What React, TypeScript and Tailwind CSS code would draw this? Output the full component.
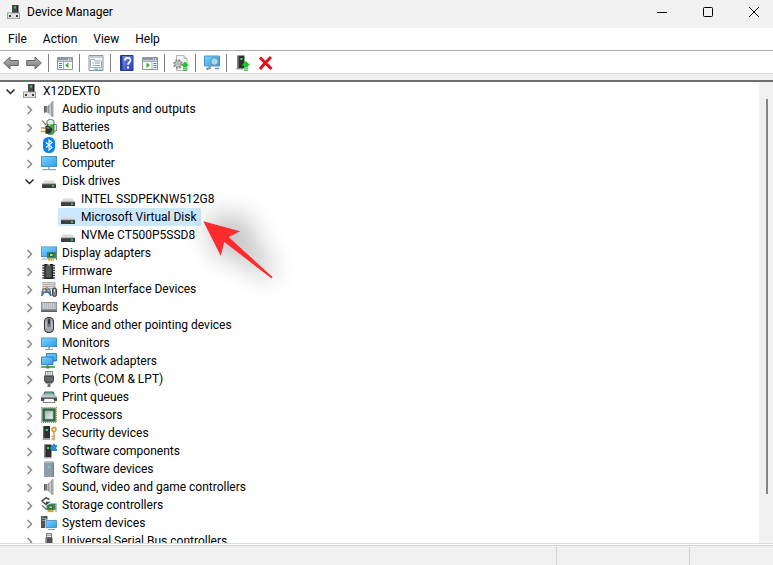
import React, { useState } from 'react'

interface DeviceNode {
  label: string
  icon: React.ReactNode
  children?: DeviceNode[]
}

function Icon({ children }: { children: React.ReactNode }) {
  return (
    <svg viewBox="0 0 16 16" className="h-4 w-4 shrink-0" aria-hidden="true">
      {children}
    </svg>
  )
}

// Shared gradients for the small drawings
function Gradients() {
  return (
    <svg className="absolute h-0 w-0" aria-hidden="true">
      <defs>
        <linearGradient id="screen" x1="0" y1="0" x2="1" y2="1">
          <stop offset="0" stopColor="#7dd2ff" />
          <stop offset="1" stopColor="#2f9fee" />
        </linearGradient>
        <linearGradient id="metal" x1="0" y1="0" x2="1" y2="0">
          <stop offset="0" stopColor="#6f7377" />
          <stop offset="0.6" stopColor="#d4d7d9" />
          <stop offset="1" stopColor="#85898c" />
        </linearGradient>
        <linearGradient id="arrow" x1="0" y1="0" x2="0" y2="1">
          <stop offset="0" stopColor="#b5b5b5" />
          <stop offset="1" stopColor="#7d7d7d" />
        </linearGradient>
        <linearGradient id="help" x1="0" y1="0" x2="1" y2="1">
          <stop offset="0" stopColor="#7f95e6" />
          <stop offset="1" stopColor="#2740b4" />
        </linearGradient>
        <linearGradient id="die" x1="0" y1="0" x2="1" y2="1">
          <stop offset="0" stopColor="#a9afaf" />
          <stop offset="1" stopColor="#f1f3f3" />
        </linearGradient>
      </defs>
    </svg>
  )
}

const HostIcon = (
  <Icon>
    <path d="M6 1h6v9H6z" fill="#454749" />
    <path d="M11 1h1.500v9H11z" fill="#26282a" />
    <path d="M8 2.500h2v2H8z" fill="#2fe03a" />
    <path d="M1 8.500h13v6.500H1z" fill="#8d9092" />
    <path d="M1.800 9.300h11.400v5H1.800z" fill="#dfe1e2" />
    <path d="M3 11h2v2H3zM10 11h2v2h-2z" fill="#3a3c3e" />
  </Icon>
)

const SpeakerIcon = (
  <Icon>
    <path d="M3 5h3v6.500H3z" fill="#7b7f83" />
    <path d="M3 5h1v6.500H3z" fill="#55595c" />
    <path d="M6.500 5L11 .5v15.500L6.500 11.500z" fill="url(#metal)" />
    <path d="M11 0h1.500v16H11z" fill="#a3a7aa" />
  </Icon>
)

const BatteryIcon = (
  <Icon>
    <path d="M6 2.500C6 0 13 0 13 2.500v11c0 2.500-7 2.500-7 0z" fill="#35b040" stroke="#555a55" strokeWidth=".9" />
    <path d="M6.500 2.500C7 .5 12 .5 12.500 2.500v2c-1 1.200-5 1.200-6 0z" fill="#e3ebe3" />
    <path d="M8.500 5.500V14" stroke="#93e696" strokeWidth="1.500" />
    <path d="M13 5.500h2.300V12H13" fill="none" stroke="#6d726d" />
    <path d="M1 1.500c1 2 2.500 1 3.500 4.500" fill="none" stroke="#333" />
    <path d="M0 9h5M0 12.500h5" stroke="#c89b2c" strokeWidth="1.500" />
    <path d="M4.500 6.500L9 7.500l2.500 2.500L9.500 14l-5 1z" fill="#2e3133" />
    <path d="M5.500 8.700l3 .5" stroke="#9a9a9a" />
  </Icon>
)

const BluetoothIcon = (
  <Icon>
    <rect x="2" y="0" width="12" height="16" rx="5.500" fill="#0a82f5" />
    <path d="M5 5.500l6 5L8 13V3l3 2.500-6 5" fill="none" stroke="#fff" strokeWidth="1.100" />
  </Icon>
)

const ComputerIcon = (
  <Icon>
    <path d="M0 1h16v11H0z" fill="#4288b5" />
    <path d="M.7 1.700h14.600v9.600H.7z" fill="url(#screen)" />
    <path d="M7 12h2v2H7z" fill="#a9bac5" />
    <path d="M1 14h14v1.200H1z" fill="#8ba2b1" />
  </Icon>
)

const DiskIcon = (
  <Icon>
    <path d="M3.500 7.500h9L15 11H1z" fill="#d9dadb" />
    <path d="M1 11h14v4H1z" fill="#3c3e40" />
    <path d="M1 11h14" stroke="#7f8284" strokeWidth=".8" />
    <path d="M11 12.300h2v1.500h-2z" fill="#3de04a" />
  </Icon>
)

const DisplayIcon = (
  <Icon>
    <path d="M0 1.500h16V12H0z" fill="#4288b5" />
    <path d="M.7 2.200h14.600v9H.7z" fill="url(#screen)" />
    <path d="M1 14h5" stroke="#8ba2b1" />
    <path d="M6 7h9v6.500H6z" fill="#3a8558" />
    <path d="M15.500 5.500V15" stroke="#767b7e" />
    <path d="M8.500 8.500h3.500v3H8.500z" fill="#b5d4c0" stroke="#174d2c" strokeWidth=".8" />
    <path d="M7 13.500h6v2.200H7z" fill="#f0a020" />
    <path d="M9.500 14v2M11.500 14v2" stroke="#fff" strokeWidth=".4" />
  </Icon>
)

const FirmwareIcon = (
  <Icon>
    <path d="M1.300 2.500h12.700M1.300 5h12.700M1.300 7.500h12.700M1.300 10h12.700M1.300 12.500h12.700M1.300 15h12.700" stroke="#3c3f42" strokeWidth="1.400" />
    <path d="M3.300 1h8.700v15H3.300z" fill="#222426" />
    <path d="M4.700 2.500h5.900v12H4.700z" fill="#55585b" />
    <path d="M6.500 1h2.500v1.500H6.500z" fill="#b5b5b5" />
  </Icon>
)

const HidIcon = (
  <Icon>
    <path d="M1.500 1h13v7h-13z" fill="#a8adb0" />
    <path d="M2.500 2.500h11M2.500 4.500h11M2.500 6.500h11" stroke="#fafafa" strokeWidth="1.200" strokeDasharray="1.300 .7" />
    <path d="M1 8.500C2.500 6.500 8 6.500 9.500 8.500l1.200 6.500H9L7 12H3.500L1.500 15H0z" fill="#56718e" />
    <path d="M2 9.500h2.500M3.200 8.300v2.400" stroke="#e8eef3" strokeWidth=".8" />
    <path d="M5 6h2.200v2.200H5z" fill="#f28b20" />
    <path d="M6.500 9.500h2" stroke="#7fd6ff" strokeWidth="1.500" />
    <rect x="11.500" y="7" width="4" height="8.500" rx="1.800" fill="#80858a" stroke="#2c2f31" strokeWidth=".9" />
    <path d="M13.500 8v3" stroke="#e4e4e4" strokeWidth=".7" />
  </Icon>
)

const KeyboardIcon = (
  <Icon>
    <path d="M0 3h16v10H0z" fill="#8f9498" />
    <path d="M0 11.500h16V13H0z" fill="#5b5f63" />
    <path d="M1.500 5h13M1.500 7h13M1.500 9h13" stroke="#f7f8f8" strokeWidth="1.300" strokeDasharray="1.300 .7" />
  </Icon>
)

const MouseIcon = (
  <Icon>
    <rect x="3.500" y=".5" width="9" height="15" rx="4" fill="#9ea3a8" stroke="#34383c" strokeWidth="1.100" />
    <path d="M6.500 1h3v8c0 1-3 1-3 0z" fill="#68707a" />
    <path d="M8 2.500v4.500" stroke="#15181b" strokeWidth="1.300" />
    <path d="M5 4.500v7M11 4.500v7" stroke="#c5c9cd" />
  </Icon>
)

const MonitorIcon = (
  <Icon>
    <path d="M0 2.500h16V12H0z" fill="#4a8dba" />
    <path d="M.8 3.300h14.400v8H.8z" fill="url(#screen)" />
    <path d="M7 12h2v2H7z" fill="#9db0bc" />
    <path d="M4 14h8v1H4z" fill="#8ba2b1" />
  </Icon>
)

const NetworkIcon = (
  <Icon>
    <path d="M5.500 .5h10V8h-10z" fill="url(#screen)" stroke="#1c6ca9" strokeWidth=".8" />
    <path d="M.5 4h11.500v7.500H.5z" fill="url(#screen)" stroke="#1c6ca9" strokeWidth=".8" />
    <path d="M5.500 11.500h2V13h-2z" fill="#8d9396" />
    <path d="M0 14h14" stroke="#4bbd56" strokeWidth="2" />
    <path d="M5 12.800h3.500v2.700H5z" fill="#3f9348" />
  </Icon>
)

const PortIcon = (
  <Icon>
    <path d="M4.500 .5h7v4.500h-7z" fill="#eceded" stroke="#6d7073" strokeWidth=".9" />
    <path d="M6.500 1v3.500M8 1v3.500M9.500 1v3.500" stroke="#9d9fa2" strokeWidth=".7" />
    <path d="M3 4.500h10V10l-2 2.500H5L3 10z" fill="#505356" />
    <path d="M5 6v4M7 6v4.500M9 6v4.500M11 6v4" stroke="#85898c" strokeWidth=".8" />
    <path d="M6.500 12.500h3V16h-3z" fill="#6c6f72" />
  </Icon>
)

const PrinterIcon = (
  <Icon>
    <path d="M3.500 2.500h9L14 6H2z" fill="#51565a" />
    <path d="M4.500 3.500h7l.8 1.500H3.700z" fill="#58bfa9" />
    <path d="M0 7.500L2 5.300h12l2 2.200V9H0z" fill="#c3c7ca" />
    <path d="M0 8.500h16V12H0z" fill="#4b4f53" />
    <path d="M3.300 9.500h9.400l1.300 4H2z" fill="#fafafa" stroke="#4a4d50" strokeWidth=".7" />
    <path d="M12 6.800h2" stroke="#4be05c" />
  </Icon>
)

const ProcessorIcon = (
  <Icon>
    <rect x=".6" y=".6" width="14.800" height="14.800" fill="none" stroke="#b39235" strokeWidth="1.200" strokeDasharray="1.200 .8" />
    <path d="M1.300 1.300h13.400v13.400H1.300z" fill="#2b6649" />
    <path d="M4 4h8v8H4z" fill="url(#die)" stroke="#8fae9d" strokeWidth=".6" />
  </Icon>
)

const SecurityIcon = (
  <Icon>
    <path d="M2 1h7v12.500H2z" fill="#2d2f31" />
    <path d="M2 1h1.200v12.500H2z" fill="#696c6f" />
    <path d="M4.800 4h2v2h-2z" fill="#3af04a" />
    <path d="M1.500 13.500H9V15H1.500z" fill="#a2a5a7" />
    <circle cx="13" cy="4.500" r="2" fill="none" stroke="#d3a24a" strokeWidth="1.800" />
    <path d="M13 7v8.500M12.500 11.500h-2M12.500 14h-2" stroke="#d3a24a" strokeWidth="1.500" />
  </Icon>
)

const ComponentIcon = (
  <Icon>
    <path d="M3.500 1.500h7V14h-7z" fill="#2d2f31" />
    <path d="M3.500 1.500h1.200V14H3.500z" fill="#696c6f" />
    <path d="M6 4h2v2H6z" fill="#3af04a" />
    <path d="M3 14h7.500v1.300H3z" fill="#a2a5a7" />
    <path d="M10 2h2c-.5-2 2.500-2 2 0h2v2.200c-1.500-.4-1.500 2 0 1.600V8h-6V5.800c-1.500.4-1.500-2 0-1.600z" fill="#2f8ad8" />
  </Icon>
)

const SoftwareIcon = (
  <Icon>
    <path d="M3 1.500L4.500 0h7L13 1.500V16H3z" fill="#8e9da8" />
    <path d="M3 1.500L4.500 0h7L13 1.500z" fill="#bcc6cd" />
    <path d="M11.500 1.500H13V16h-1.500z" fill="#74838e" />
    <path d="M7 5h2v2H7z" fill="#45dcf2" />
  </Icon>
)

const StorageIcon = (
  <Icon>
    <path d="M8.500 2.500L5 .8 1 4l4 3.500L7.500 5.500H5" fill="none" stroke="#45484a" strokeWidth="1.500" />
    <path d="M1 8.500l4 3.500h2" fill="none" stroke="#6c7073" strokeWidth="1.300" />
    <path d="M5.500 8.500l4-2h5V13h-9z" fill="#3a8558" />
    <path d="M8 9h3.500v2.500H8z" fill="#b5d4c0" stroke="#174d2c" strokeWidth=".7" />
    <path d="M15 6.500V15" stroke="#767b7e" />
    <path d="M6.500 13h6v2.200h-6z" fill="#f0a020" />
  </Icon>
)

const SystemIcon = (
  <Icon>
    <path d="M0 1h6.500v12H0z" fill="#505356" />
    <path d="M1 3.500h4.500M1 5.500h4.500" stroke="#9b9fa2" strokeWidth=".8" />
    <path d="M1 2h1.500" stroke="#3af04a" />
    <path d="M4 4.500h12v9H4z" fill="#e3edf4" />
    <path d="M5 5.500h10.500v7H5z" fill="url(#screen)" stroke="#4288b5" strokeWidth=".8" />
    <path d="M7 14.500h7" stroke="#8ba2b1" />
  </Icon>
)

const UsbIcon = (
  <Icon>
    <path d="M5.500 .5h5V4.500h-5z" fill="#e6e8e9" stroke="#6d7073" strokeWidth=".9" />
    <path d="M6.500 2.200h1M8.500 2.200h1" stroke="#333" />
    <path d="M4.500 4.500h7V12l-2 3h-3l-2-3z" fill="#505356" />
    <path d="M5.500 5v7" stroke="#85898c" />
  </Icon>
)

const devices: DeviceNode[] = [
  { label: 'Audio inputs and outputs', icon: SpeakerIcon },
  { label: 'Batteries', icon: BatteryIcon },
  { label: 'Bluetooth', icon: BluetoothIcon },
  { label: 'Computer', icon: ComputerIcon },
  {
    label: 'Disk drives',
    icon: DiskIcon,
    children: [
      { label: 'INTEL SSDPEKNW512G8', icon: DiskIcon },
      { label: 'Microsoft Virtual Disk', icon: DiskIcon },
      { label: 'NVMe CT500P5SSD8', icon: DiskIcon },
    ],
  },
  { label: 'Display adapters', icon: DisplayIcon },
  { label: 'Firmware', icon: FirmwareIcon },
  { label: 'Human Interface Devices', icon: HidIcon },
  { label: 'Keyboards', icon: KeyboardIcon },
  { label: 'Mice and other pointing devices', icon: MouseIcon },
  { label: 'Monitors', icon: MonitorIcon },
  { label: 'Network adapters', icon: NetworkIcon },
  { label: 'Ports (COM & LPT)', icon: PortIcon },
  { label: 'Print queues', icon: PrinterIcon },
  { label: 'Processors', icon: ProcessorIcon },
  { label: 'Security devices', icon: SecurityIcon },
  { label: 'Software components', icon: ComponentIcon },
  { label: 'Software devices', icon: SoftwareIcon },
  { label: 'Sound, video and game controllers', icon: SpeakerIcon },
  { label: 'Storage controllers', icon: StorageIcon },
  { label: 'System devices', icon: SystemIcon },
  { label: 'Universal Serial Bus controllers', icon: UsbIcon },
]

const toolbar: ({ label: string; icon: React.ReactNode } | null)[] = [
  {
    label: 'Back',
    icon: (
      <Icon>
        <path d="M.7 8L7 2v3.500h8.300v5H7V14z" fill="url(#arrow)" stroke="#666" />
      </Icon>
    ),
  },
  {
    label: 'Forward',
    icon: (
      <Icon>
        <path d="M15.300 8L9 2v3.500H.7v5H9V14z" fill="url(#arrow)" stroke="#666" />
      </Icon>
    ),
  },
  null,
  {
    label: 'Show or hide console tree',
    icon: (
      <Icon>
        <path d="M.5 2.500h15v12H.5z" fill="#fff" stroke="#8c939b" />
        <path d="M1 3h14v2.500H1z" fill="#8c99a8" />
        <path d="M11 4h3" stroke="#fff" strokeDasharray="1 1" />
        <path d="M1 6.500h14M6.500 7v7" stroke="#a6abb2" />
        <path d="M2 8.500h3M2 10.500h3M2 12.500h3" stroke="#3d7fc4" />
        <path d="M11.500 7.500v5.500L8 10.250z" fill="#35b422" />
      </Icon>
    ),
  },
  null,
  {
    label: 'Properties',
    icon: (
      <Icon>
        <path d="M1 .5h14v15H1z" fill="#f4f5f6" stroke="#8c939b" />
        <path d="M1.500 2h13" stroke="#b4bfcc" strokeWidth="1.500" />
        <path d="M2.500 12.500v-8h4v1.500h7v6.500z" fill="#fff" stroke="#a6abb2" />
        <path d="M4.500 8h1.500M4.500 10.500h1.500" stroke="#3db4d4" />
        <path d="M7 8h5M7 10.500h5" stroke="#8c939b" />
        <path d="M6.500 14.200h3.500" stroke="#42cbe8" strokeWidth="1.500" />
        <path d="M11 14.200h3" stroke="#a3b0c0" />
      </Icon>
    ),
  },
  null,
  {
    label: 'Help',
    icon: (
      <Icon>
        <path d="M1.500 .5H14v15H1.500z" fill="url(#help)" stroke="#26358f" />
        <path d="M2 1h1.500v14H2z" fill="#24368f" />
        <path d="M6 5.500C6 2 11.500 2 11.500 5.300c0 2-2.500 2.200-2.500 4.500" fill="none" stroke="#fff" strokeWidth="1.700" />
        <path d="M8 11.500h2v2H8z" fill="#fff" />
      </Icon>
    ),
  },
  {
    label: 'Show or hide action pane',
    icon: (
      <Icon>
        <path d="M.5 2.500h15v12H.5z" fill="#fff" stroke="#8c939b" />
        <path d="M1 3h14v2.500H1z" fill="#8c99a8" />
        <path d="M11 4h3" stroke="#fff" strokeDasharray="1 1" />
        <path d="M1 6.500h14M10 7v7" stroke="#a6abb2" />
        <path d="M11.500 8.500h3M11.500 10.500h3M11.500 12.500h3" stroke="#3d7fc4" />
        <path d="M4.500 7.500v5.500L8 10.250z" fill="#35b422" />
      </Icon>
    ),
  },
  null,
  {
    label: 'Update driver',
    icon: (
      <Icon>
        <path d="M3.500 .5H11L14 3.500v12H3.500z" fill="#f6f6f6" stroke="#b5b5b5" />
        <path d="M11 .5v3h3" fill="none" stroke="#b5b5b5" />
        <circle cx="5" cy="9" r="4" fill="#e4e4e4" stroke="#8b8b8b" strokeWidth="1.800" strokeDasharray="1.800 1.350" />
        <circle cx="5" cy="9" r="3" fill="#dcdcdc" stroke="#8b8b8b" strokeWidth=".8" />
        <circle cx="5" cy="9" r="1.200" fill="#fff" stroke="#888" strokeWidth=".8" />
        <path d="M12 6.500l4 4h-2V12h-4v-1.500H8z" fill="#1dc52a" />
        <path d="M10 13.200h4M10 15.200h4" stroke="#1dc52a" strokeWidth="1.200" />
      </Icon>
    ),
  },
  null,
  {
    label: 'Scan for hardware changes',
    icon: (
      <Icon>
        <path d="M.5 1h15v10H.5z" fill="url(#screen)" stroke="#4b93c4" />
        <path d="M2 13.500h5M11 13.500h4" stroke="#7c8d99" strokeWidth="1.300" />
        <path d="M8 9.500L3 15" stroke="#8a9299" strokeWidth="1.500" />
        <circle cx="10.500" cy="6.500" r="3.800" fill="#a3dafa" stroke="#6f8697" />
      </Icon>
    ),
  },
  null,
  {
    label: 'Enable device',
    icon: (
      <Icon>
        <path d="M2.500 .5h7v12.500h-7z" fill="#2d2f31" />
        <path d="M2.500 .5h1.200v12.500H2.500z" fill="#777" />
        <path d="M5.500 3h2v2h-2z" fill="#3af04a" />
        <path d="M1.500 13h7v1.500h-7z" fill="#8d9092" />
        <path d="M11 6l4.500 4.500H13V12H9v-1.500H6.500z" fill="#1dc52a" />
        <path d="M9 13.200h4M9 15.200h4" stroke="#1dc52a" strokeWidth="1.200" />
      </Icon>
    ),
  },
  {
    label: 'Uninstall device',
    icon: (
      <Icon>
        <path d="M2 2.500c3 3 7.500 7.500 11.500 11.500M13 2C9 6 5.500 9.500 2 14" fill="none" stroke="#dc0f1a" strokeWidth="3" />
      </Icon>
    ),
  },
]

function Chevron({ open, label, onClick }: { open: boolean; label: string; onClick?: () => void }) {
  return (
    <button type="button" aria-label={`${open ? 'Collapse' : 'Expand'} ${label}`} onClick={onClick} className="h-4 w-4 shrink-0">
      <Icon>
        {open ? (
          <path d="M3.500 6.500l4 4 4-4" fill="none" stroke="#222" strokeWidth="1.500" />
        ) : (
          <path d="M5.500 5l4 4-4 4" fill="none" stroke="#8a8a8a" strokeWidth="1.500" />
        )}
      </Icon>
    </button>
  )
}

interface LabelProps {
  node: DeviceNode
  selected: string
  onSelect: (label: string) => void
}

function NodeLabel({ node, selected, onSelect }: LabelProps) {
  return (
    <button
      type="button"
      onClick={() => onSelect(node.label)}
      className={`flex h-[18px] items-center gap-[5px] rounded-xs pr-1 pl-0.5 leading-4 whitespace-nowrap ${
        node.label === selected ? 'bg-[#cce8ff]' : ''
      }`}
    >
      {node.icon}
      <span>{node.label}</span>
    </button>
  )
}

function DeviceTree() {
  const [selected, setSelected] = useState('Microsoft Virtual Disk')
  const [open, setOpen] = useState<string[]>(['Disk drives'])

  const toggle = (label: string) => {
    setOpen(open.includes(label) ? open.filter((l) => l !== label) : [...open, label])
  }

  return (
    <div className="relative min-w-0 flex-1 overflow-hidden pl-[3px]">
      <div className="flex items-center gap-px">
        <Chevron open label="X12DEXT0" />
        <NodeLabel node={{ label: 'X12DEXT0', icon: HostIcon }} selected={selected} onSelect={setSelected} />
      </div>
      <ul className="pl-[19px]">
        {devices.map((node) => (
          <li key={node.label}>
            <div className="flex items-center gap-px">
              <Chevron open={open.includes(node.label)} label={node.label} onClick={() => toggle(node.label)} />
              <NodeLabel node={node} selected={selected} onSelect={setSelected} />
            </div>
            {node.children && open.includes(node.label) && (
              <ul className="pl-9">
                {node.children.map((child) => (
                  <li key={child.label}>
                    <NodeLabel node={child} selected={selected} onSelect={setSelected} />
                  </li>
                ))}
              </ul>
            )}
          </li>
        ))}
      </ul>
      {/* Callout arrow over the tree */}
      <svg
        viewBox="0 0 140 140"
        className="pointer-events-none absolute top-[98px] left-[170px] h-[140px] w-[140px] overflow-visible"
        aria-hidden="true"
      >
        <defs>
          <filter id="soft" x="-60%" y="-60%" width="220%" height="220%">
            <feGaussianBlur stdDeviation="13" />
          </filter>
        </defs>
        <path d="M36 34L82 38L80 50L106 92L98 100L60 74L46 78z" fill="#000" opacity=".24" filter="url(#soft)" />
        <path d="M33.300 41.300L70 51.300L58.700 57L102.700 97.300L101.300 98.300L54.300 62L50.700 75.700z" fill="#fd2b2d" />
      </svg>
    </div>
  )
}

export default function App() {
  return (
    <div className="flex h-screen flex-col bg-white font-['Roboto','Open_Sans',sans-serif] text-xs text-black">
      <Gradients />
      <header className="flex h-7 shrink-0 items-center justify-between bg-[#f2f2f2]">
        <div className="flex items-center gap-[5px] pb-1 pl-1.5">
          {HostIcon}
          <h1 className="leading-4">Device Manager</h1>
        </div>
        <div className="flex pb-1">
          <button type="button" aria-label="Minimize" className="flex h-6 w-[46px] items-center justify-center">
            <svg viewBox="0 0 10 10" className="h-2.5 w-2.5">
              <path d="M0 5.500h10" stroke="#000" />
            </svg>
          </button>
          <button type="button" aria-label="Maximize" className="flex h-6 w-[46px] items-center justify-center">
            <svg viewBox="0 0 10 10" className="h-2.5 w-2.5">
              <rect x=".5" y=".5" width="9" height="9" rx="1" fill="none" stroke="#000" />
            </svg>
          </button>
          <button type="button" aria-label="Close" className="flex h-6 w-[42px] items-center justify-center pl-1">
            <svg viewBox="0 0 10 10" className="h-2.5 w-2.5">
              <path d="M0 0l10 10M10 0L0 10" stroke="#000" />
            </svg>
          </button>
        </div>
      </header>

      <nav className="flex shrink-0 gap-4 border-b border-[#adadad] px-2 py-[3px] leading-4">
        <button type="button">File</button>
        <button type="button">Action</button>
        <button type="button">View</button>
        <button type="button">Help</button>
      </nav>

      <div role="toolbar" className="flex h-[23px] shrink-0 items-center border-b border-[#d6d6d6]">
        {toolbar.map((item, i) =>
          item ? (
            <button key={i} type="button" aria-label={item.label} className="flex w-[23px] items-center pt-0.5 pl-[3px]">
              {item.icon}
            </button>
          ) : (
            <div key={i} className="mt-0.5 mr-[5px] ml-0.5 h-[18px] w-px bg-[#808080]" />
          )
        )}
      </div>

      <main className="flex min-h-0 flex-1 flex-col bg-[#f0f0f0] pt-1.5">
        <div className="flex min-h-0 flex-1 border-t-2 border-[#6e6e6e] bg-white">
          <DeviceTree />
          <div className="flex w-3.5 shrink-0 bg-[#f0f0f0]">
            <div className="mt-[17px] mb-[49px] ml-[7px] w-0.5 bg-[#858585]" />
          </div>
        </div>
      </main>

      <footer className="flex h-[22px] shrink-0 flex-col border-t border-[#dcdcdc] bg-white pt-px">
        <div className="flex flex-1 border-t border-[#d3d3d3] bg-[#f0f0f0] pt-px">
          <div className="flex-1" />
          <div className="w-[133px] border-l border-[#d3d3d3]" />
          <div className="w-[84px] border-l border-[#d3d3d3]" />
        </div>
      </footer>
    </div>
  )
}
